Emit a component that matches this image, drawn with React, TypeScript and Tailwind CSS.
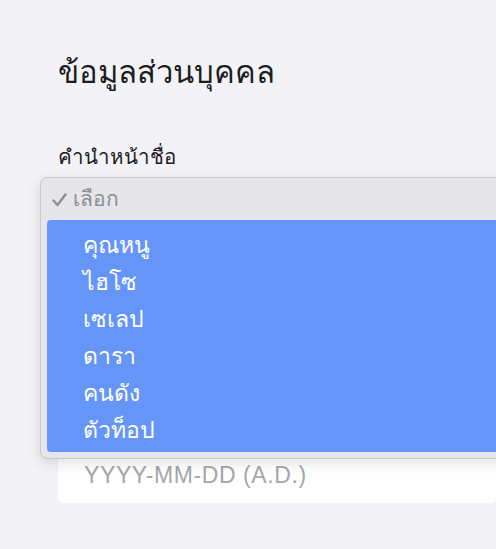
import React from "react";

const items = ["คุณหนู", "ไฮโซ", "เซเลป", "ดารา", "คนดัง", "ตัวท็อป"];

export default function App() {
  return (
    <div className="relative w-[496px] h-[549px] overflow-hidden bg-[#f3f3f7] font-['Noto_Sans','DejaVu_Sans',sans-serif]">
      <div className="pl-[58px] pt-[50px] pr-0">
        <h1 className="text-[31px] leading-[42px] text-[#1d1d1f] font-normal">ข้อมูลส่วนบุคคล</h1>
        <div className="mt-[50px] text-[20.5px] leading-[28px] text-[#1d1d1f]">คำนำหน้าชื่อ</div>
        <div className="mt-[14px] h-[54px] rounded-lg bg-white" />
        <div className="mt-[210px] h-[55px] rounded-md bg-white flex items-center pl-[26px] text-[23px] tracking-[0.6px] text-[#a6a6ab] font-['Liberation_Sans',sans-serif]">
          YYYY-MM-DD (A.D.)
        </div>
      </div>

      <div className="absolute left-[40px] top-[177px] w-[520px] h-[282px] rounded-[7px] border border-[#c9c9ce] bg-[#e5e5ea] shadow-[0_4px_14px_rgba(0,0,0,0.12)]">
        <div className="h-[42px] flex items-center pl-[11px] text-[21px] text-[#8e8e93]">
          <svg width="15" height="14" viewBox="0 0 15 14" className="mr-[6px] mt-[2px]">
            <path d="M1.5 7.5 L5.5 12 L13.5 1.5" fill="none" stroke="#8e8e93" strokeWidth="2.4" strokeLinecap="round" strokeLinejoin="round" />
          </svg>
          <span>เลือก</span>
        </div>
        <div className="ml-[6px] h-[232px] rounded-l-[4px] bg-[#6596f7] pt-[6px]">
          {items.map((it) => (
            <div key={it} className="h-[37px] flex items-center pl-[36px] text-[23px] leading-[37px] text-white">
              {it}
            </div>
          ))}
        </div>
      </div>
    </div>
  );
}
